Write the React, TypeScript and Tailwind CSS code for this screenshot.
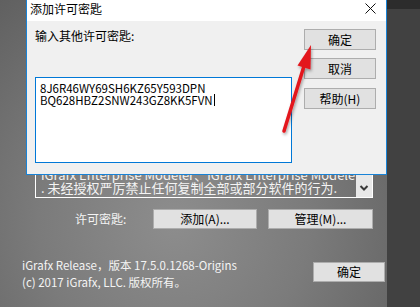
import React from "react";

const cjk = { fontFamily: '"Noto Sans CJK SC", "Noto Sans", sans-serif' };

const WinButton: React.FC<{ label: React.ReactNode; className?: string }> = ({ label, className = "" }) => (
  <div
    className={`flex items-center justify-center border border-[#adadad] bg-[#e1e1e1] text-[12px] leading-none text-black ${className}`}
  >
    {label}
  </div>
);

export default function App() {
  return (
    <div className="relative flex h-[307px] w-[420px] overflow-hidden" style={cjk}>
      {/* main About window behind */}
      <div className="relative h-full w-[387px] bg-[radial-gradient(ellipse_at_45%_72%,#8d8d8d_0%,#7b7b7b_45%,#5b5b5b_100%)] text-[#f4f4f4]">
        {/* licence text box */}
        <div className="ml-[35px] mt-[58px] flex h-[140px] w-[338px] border border-white">
          <div className="flex flex-1 flex-col justify-end overflow-hidden pb-[3px] pl-[5px] text-[13px] leading-[13px] whitespace-nowrap">
            <div>iGrafx Enterprise Modeler、iGrafx Enterprise Modeler Server</div>
            <div>. 未经授权严厉禁止任何复制全部或部分软件的行为.</div>
          </div>
          <div className="flex w-[16px] flex-col justify-end bg-[#e8e8e8] pb-[5px]">
            <svg width="16" height="8" viewBox="0 0 16 8">
              <polyline points="4.5,2 8,5.5 11.5,2" fill="none" stroke="#3a3a3a" strokeWidth="2" />
            </svg>
          </div>
        </div>

        {/* licence key row */}
        <div className="mt-[11px] flex h-[20px] items-center">
          <span className="ml-[75px] w-[78px] text-[12px]">许可密匙:</span>
          <WinButton className="h-[20px] w-[104px]" label="添加(A)..." />
          <WinButton className="ml-[11px] h-[20px] w-[105px]" label="管理(M)..." />
        </div>

        {/* version info + ok */}
        <div className="mt-[28px] flex items-start">
          <div className="pl-[22px] text-[11.5px] leading-[17px]">
            <div>iGrafx Release，版本 17.5.0.1268-Origins</div>
            <div>(c) 2017 iGrafx, LLC. 版权所有。</div>
          </div>
          <WinButton className="ml-auto mr-[2px] mt-[5px] h-[20px] w-[72px]" label="确定" />
        </div>
      </div>

      {/* dark desktop strip */}
      <div className="flex flex-1 flex-col bg-[#414141]">
        <div className="h-[9px] bg-[#2c2c2c]" />
      </div>

      {/* add licence key dialog */}
      <div className="absolute left-[26px] top-0 flex h-[175px] w-[361px] flex-col border border-t-0 border-[#1883d7] bg-[#f0f0f0] text-black">
        <div className="relative h-[21px] bg-white">
          <span className="ml-[3px] block pt-[1px] text-[12px] leading-[15px]">添加许可密匙</span>
          <svg className="absolute right-[10px] top-[3px]" width="11" height="11" viewBox="0 0 11 11">
            <path d="M0.5 0.5 L10.5 10.5 M10.5 0.5 L0.5 10.5" stroke="#111" strokeWidth="1" />
          </svg>
        </div>
        <div className="flex px-[8px]">
          <div className="w-[257px]">
            <div className="mt-[7px] text-[12px] leading-[16px]">输入其他许可密匙:</div>
            <div className="mt-[33px] h-[86px] border border-[#0078d7] bg-white pl-[4px] pt-[4px] text-[11.5px] leading-[12px]">
              <div>8J6R46WY69SH6KZ65Y593DPN</div>
              <div className="flex items-center">
                <span>BQ628HBZ2SNW243GZ8KK5FVN</span>
                <span className="ml-[1px] inline-block h-[12px] w-px bg-black" />
              </div>
            </div>
          </div>
          <div className="ml-[12px] mt-[8px] flex w-[72px] flex-col">
            <WinButton className="h-[21px]" label="确定" />
            <WinButton className="mt-[8px] h-[21px]" label="取消" />
            <WinButton className="mt-[9px] h-[21px]" label="帮助(H)" />
          </div>
        </div>
      </div>

      {/* red annotation arrow */}
      <svg className="pointer-events-none absolute left-0 top-0" width="420" height="307" viewBox="0 0 420 307">
        <defs>
          <filter id="sh" x="-50%" y="-50%" width="200%" height="200%">
            <feDropShadow dx="1" dy="2" stdDeviation="1.5" floodColor="#000" floodOpacity="0.35" />
          </filter>
        </defs>
        <g filter="url(#sh)">
          <line x1="284" y1="131" x2="304" y2="66" stroke="#e3161d" strokeWidth="3.5" strokeLinecap="round" />
          <polygon points="311,45 297.5,65.5 310.5,69.5" fill="#e3161d" />
        </g>
      </svg>
    </div>
  );
}
